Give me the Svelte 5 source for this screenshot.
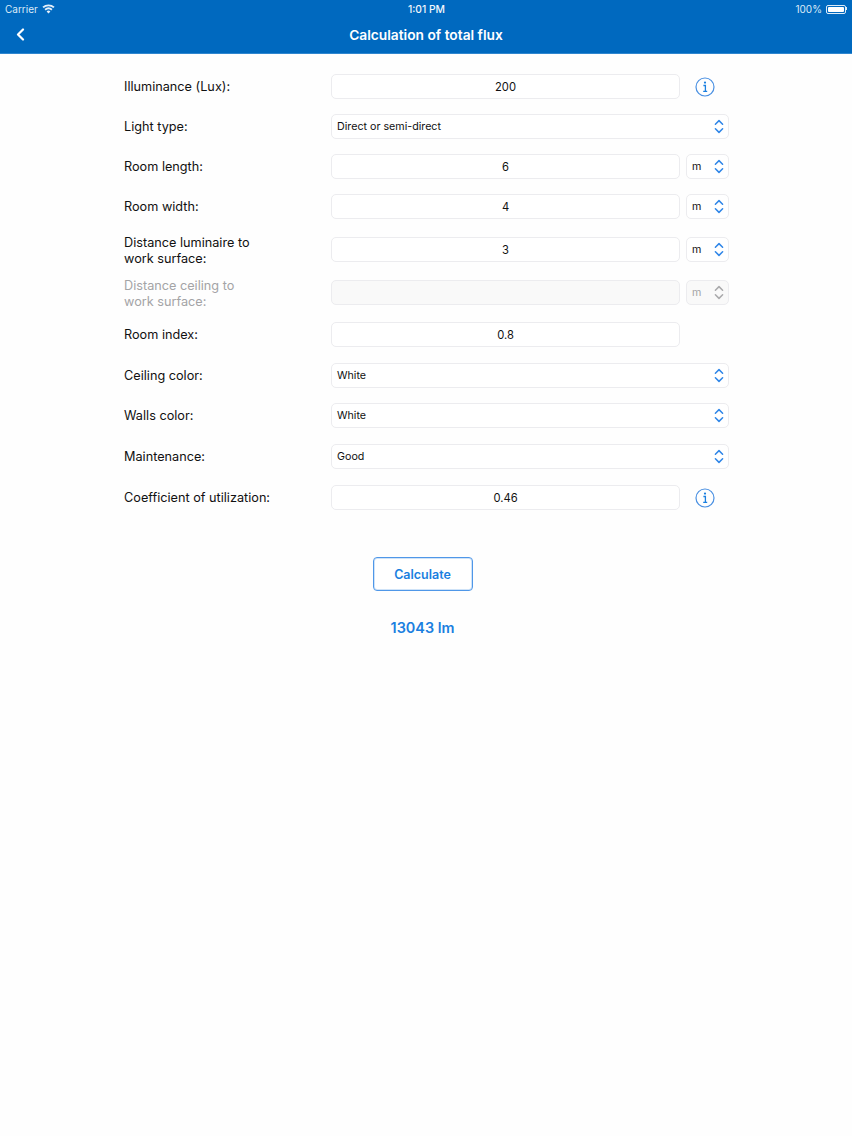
<script>
  // Form rows: kind is input, select or unit (input plus unit picker)
  const rows = [
    { label: 'Illuminance (Lux):', kind: 'input', value: '200', info: true, space: 's0' },
    { label: 'Light type:', kind: 'select', value: 'Direct or semi-direct', space: 's15' },
    { label: 'Room length:', kind: 'unit', value: '6', space: 's15' },
    { label: 'Room width:', kind: 'unit', value: '4', space: 's15' },
    { label: 'Distance luminaire to\nwork surface:', kind: 'unit', value: '3', space: 's18' },
    { label: 'Distance ceiling to\nwork surface:', kind: 'unit', value: '', disabled: true, space: 's18' },
    { label: 'Room index:', kind: 'input', value: '0.8', space: 's17' },
    { label: 'Ceiling color:', kind: 'select', value: 'White', space: 's16' },
    { label: 'Walls color:', kind: 'select', value: 'White', space: 's15' },
    { label: 'Maintenance:', kind: 'select', value: 'Good', space: 's16' },
    { label: 'Coefficient of utilization:', kind: 'input', value: '0.46', info: true, space: 's16' }
  ];
</script>

{#snippet chevrons()}
  <svg class="chev" width="10" height="15" viewBox="0 0 10 15" fill="none" stroke="currentColor" stroke-width="1.5" stroke-linecap="round" stroke-linejoin="round">
    <path d="M1.4 5.2 5 1.6l3.6 3.6" />
    <path d="M1.4 9.8 5 13.4l3.6-3.6" />
  </svg>
{/snippet}

<div class="page">
  <header class="topbar">
    <div class="status">
      <div class="status-left">
        <span>Carrier</span>
        <svg width="13" height="10" viewBox="0 0 13 10" fill="#e6f0fa">
          <path d="M6.5 9.6 4.6 7.4a3 3 0 0 1 3.8 0z" />
          <path d="M3.7 6.4 2.5 5a6.2 6.2 0 0 1 8 0L9.3 6.4a4.4 4.4 0 0 0-5.6 0z" />
          <path d="M1.7 4.1.4 2.7a9.3 9.3 0 0 1 12.2 0l-1.3 1.4a7.4 7.4 0 0 0-9.6 0z" />
        </svg>
      </div>
      <span class="clock">1:01 PM</span>
      <div class="status-right">
        <span>100%</span>
        <div class="battery"><div class="battery-fill"></div></div>
      </div>
    </div>
    <div class="nav">
      <svg class="back" width="9" height="13" viewBox="0 0 9 13" fill="none" stroke="#fff" stroke-width="2.2" stroke-linecap="round" stroke-linejoin="round">
        <path d="M7 1.5 2 6.5l5 5" />
      </svg>
      <h1>Calculation of total flux</h1>
    </div>
  </header>

  <main class="form">
    {#each rows as row}
      <div class="row {row.space}" class:disabled={row.disabled}>
        <div class="label">{row.label}</div>
        {#if row.kind === 'select'}
          <div class="field select">
            <span>{row.value}</span>
            <span class="blue">{@render chevrons()}</span>
          </div>
        {:else}
          <div class="field input">{row.value}</div>
          {#if row.kind === 'unit'}
            <div class="field unit">
              <span>m</span>
              <span class="blue">{@render chevrons()}</span>
            </div>
          {/if}
          {#if row.info}
            <svg class="info" width="20" height="20" viewBox="0 0 20 20" fill="none">
              <circle cx="10" cy="10" r="9" stroke="#4a90e2" stroke-width="1.2" />
              <circle cx="10" cy="5.6" r="1.1" fill="#1a7fe0" />
              <path d="M8.4 8.5H10.4V14.2M8.2 14.4H12.2" stroke="#1a7fe0" stroke-width="1.3" />
            </svg>
          {/if}
        {/if}
      </div>
    {/each}
  </main>

  <div class="actions">
    <button type="button" class="calc">Calculate</button>
    <div class="result">13043 lm</div>
  </div>
</div>

<style>
  :global(body) {
    margin: 0;
    background: #fefefe;
  }

  .page {
    min-height: 1136px;
    font-family: Inter, "Liberation Sans", sans-serif;
    color: #111;
  }

  .topbar {
    height: 53px;
    background: #0069bf;
    border-bottom: 1px solid #2f86cf;
    color: #fff;
  }

  .status {
    display: flex;
    justify-content: space-between;
    align-items: center;
    position: relative;
    height: 18px;
    padding: 0 5px;
    font-size: 10px;
    color: #dcebf8;
  }

  .status-left,
  .status-right {
    display: flex;
    align-items: center;
    gap: 4px;
  }

  .clock {
    position: absolute;
    left: 1px;
    right: 0;
    text-align: center;
    font-size: 10.3px;
    font-weight: 500;
    color: #f2f7fc;
  }

  .battery {
    position: relative;
    box-sizing: border-box;
    width: 20px;
    height: 9px;
    padding: 1px;
    border: 1px solid #dcebf8;
    border-radius: 2px;
    margin-right: 1px;
  }

  .battery::after {
    content: "";
    position: absolute;
    left: 19px;
    top: 1px;
    width: 1px;
    height: 3px;
    background: #dcebf8;
  }

  .battery-fill {
    height: 100%;
    background: #fff;
    border-radius: 1px;
  }

  .nav {
    position: relative;
    display: flex;
    justify-content: center;
    align-items: center;
    height: 34px;
  }

  .back {
    position: absolute;
    left: 16px;
    top: 10px;
  }

  h1 {
    margin: 0 0 1px;
    font-size: 13.75px;
    font-weight: 600;
  }

  .form {
    padding: 20px 0 0 124px;
    width: 605px;
  }

  .row {
    display: flex;
    align-items: center;
    height: 25px;
    font-size: 12.7px;
  }

  .s15 { margin-top: 15px; }
  .s16 { margin-top: 16px; }
  .s17 { margin-top: 17px; }
  .s18 { margin-top: 18px; }

  .label {
    width: 207px;
    flex: none;
    line-height: 16px;
    white-space: pre-line;
  }

  /* two line labels sit a bit lower than centered */
  .s18 .label {
    padding-top: 2px;
  }

  .disabled .label {
    color: #a4a4a6;
  }

  .field {
    box-sizing: border-box;
    height: 25px;
    background: #fff;
    border: 1px solid #ececef;
    border-radius: 5px;
    font-size: 10.7px;
    display: flex;
    align-items: center;
  }

  .input {
    width: 349px;
    justify-content: center;
    font-size: 11.2px;
  }

  .select {
    width: 398px;
    justify-content: space-between;
    padding: 0 4px 1px 5px;
  }

  .unit {
    width: 43px;
    margin-left: 6px;
    justify-content: space-between;
    padding: 0 4px 1px 5px;
  }

  .blue {
    display: flex;
    color: #2f86e8;
    margin-top: 1px;
  }

  .disabled .field {
    background: #f9f9f9;
    color: #a4a4a6;
  }

  .disabled .blue {
    color: #a9a9ab;
  }

  .info {
    margin-left: 15px;
  }

  .actions {
    display: flex;
    flex-direction: column;
    align-items: center;
    width: 845px;
    margin-top: 47px;
  }

  .calc {
    width: 100px;
    height: 34px;
    padding: 0;
    background: #fff;
    border: 1px solid #4f97e8;
    box-shadow: inset 0 0 0 1px #cfe3f8;
    border-radius: 4px;
    color: #1a7fe0;
    font: 600 12.5px Inter, "Liberation Sans", sans-serif;
  }

  .result {
    margin-top: 28px;
    font-size: 14.4px;
    font-weight: 600;
    color: #1a7fe0;
  }
</style>
